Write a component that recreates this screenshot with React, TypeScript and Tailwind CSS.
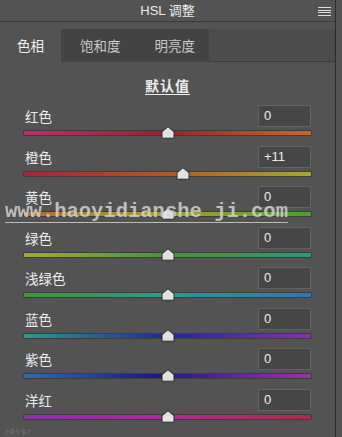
import React from "react";

type Row = { label: string; value: string; pos: number; track: string };

const rows: Row[] = [
  { label: "红色", value: "0", pos: 50, track: "bg-[linear-gradient(90deg,#b8306f,#9c1f2c_50%,#c8692a)]" },
  { label: "橙色", value: "+11", pos: 55.5, track: "bg-[linear-gradient(90deg,#a82337,#b0582a_50%,#a8a830)]" },
  { label: "黄色", value: "0", pos: 50, track: "bg-[linear-gradient(90deg,#b86a28,#a8a030_50%,#4aa02c)]" },
  { label: "绿色", value: "0", pos: 50, track: "bg-[linear-gradient(90deg,#a8a830,#3e9a30_50%,#2a9a7a)]" },
  { label: "浅绿色", value: "0", pos: 50, track: "bg-[linear-gradient(90deg,#3a9a30,#2a9a90_50%,#2a78b8)]" },
  { label: "蓝色", value: "0", pos: 50, track: "bg-[linear-gradient(90deg,#2a9a90,#1c2a9a_50%,#8a30b0)]" },
  { label: "紫色", value: "0", pos: 50, track: "bg-[linear-gradient(90deg,#2a70b0,#1c1a8a_45%,#a030a8)]" },
  { label: "洋红", value: "0", pos: 50, track: "bg-[linear-gradient(90deg,#8a30b0,#b02a9a_50%,#b02a48)]" },
];

function Thumb({ pos }: { pos: number }) {
  return (
    <svg
      width="14"
      height="13"
      viewBox="0 0 14 13"
      className="absolute top-[-5px] -translate-x-1/2"
      style={{ left: pos + "%" }}
    >
      <path d="M7 0.8 L13 5.8 L13 12.2 L1 12.2 L1 5.8 Z" fill="#e2e2e2" stroke="#2a2a2a" strokeWidth="1" />
    </svg>
  );
}

function SliderRow({ row }: { row: Row }) {
  return (
    <div className="h-[40.5px] relative">
      <div className="flex items-center justify-between pl-[25px] pr-[24px]">
        <span className="text-[13.5px] leading-[22px] text-[#ececec]">{row.label}</span>
        <div className="w-[53px] h-[22px] bg-[#464646] border border-[#626262] flex items-center px-[5px] text-[13px] text-[#ececec] font-['Liberation_Sans',sans-serif]">
          {row.value}
        </div>
      </div>
      <div className="relative ml-[24px] mt-[4px] w-[287px]">
        <div className={"h-[4px] rounded-[1px] ring-1 ring-[#3d3d3d] " + row.track} />
        <Thumb pos={row.pos} />
      </div>
    </div>
  );
}

export default function App() {
  return (
    <div className="w-[342px] h-[437px] bg-[#535353] relative overflow-hidden font-['Noto_Sans_CJK_SC',sans-serif]">
      <div className="w-[336px] h-full border-r border-[#2c2c2c]">
        <div className="h-[22px] relative flex items-center justify-center border-b border-[#3a3a3a]">
          <span className="text-[13px] text-[#ececec] font-['Liberation_Sans','Noto_Sans_CJK_SC',sans-serif]">HSL 调整</span>
          <div className="absolute right-[4px] top-[7px] w-[13px] flex flex-col gap-[1.5px]">
            <div className="h-[1px] bg-[#dcdcdc]" />
            <div className="h-[1px] bg-[#dcdcdc]" />
            <div className="h-[1px] bg-[#dcdcdc]" />
            <div className="h-[1px] bg-[#dcdcdc]" />
          </div>
        </div>
        <div className="h-[7px]" />
        <div className="h-[33px] flex text-[13.5px]">
          <div className="w-[61px] flex items-center justify-center text-[#f0f0f0]">色相</div>
          <div className="w-[148px] bg-[#434343] flex items-center text-[#c8c8c8]">
            <span className="ml-[19px]">饱和度</span>
            <span className="ml-[34px]">明亮度</span>
          </div>
          <div className="flex-1 bg-[#4c4c4c] border-b border-[#3c3c3c]" />
        </div>
        <div className="h-[43px] flex items-center justify-center pt-[4px]">
          <span className="text-[14px] font-semibold text-[#ececec] underline underline-offset-[3px] tracking-[1px]">默认值</span>
        </div>
        {rows.map((r) => (
          <SliderRow key={r.label} row={r} />
        ))}
      </div>
      <div className="absolute left-[5px] top-[201px] font-['Liberation_Mono',monospace] font-bold text-[20.5px] leading-[21px] text-[#d2d2d2]/85 border-b border-[#d6d6d6]/80 pointer-events-none">
        www.haoyidianshe ji.com
      </div>
      <div className="absolute left-[5px] bottom-[3px] text-[5px] text-[#7a7a7a]">头条号 设计</div>
    </div>
  );
}
